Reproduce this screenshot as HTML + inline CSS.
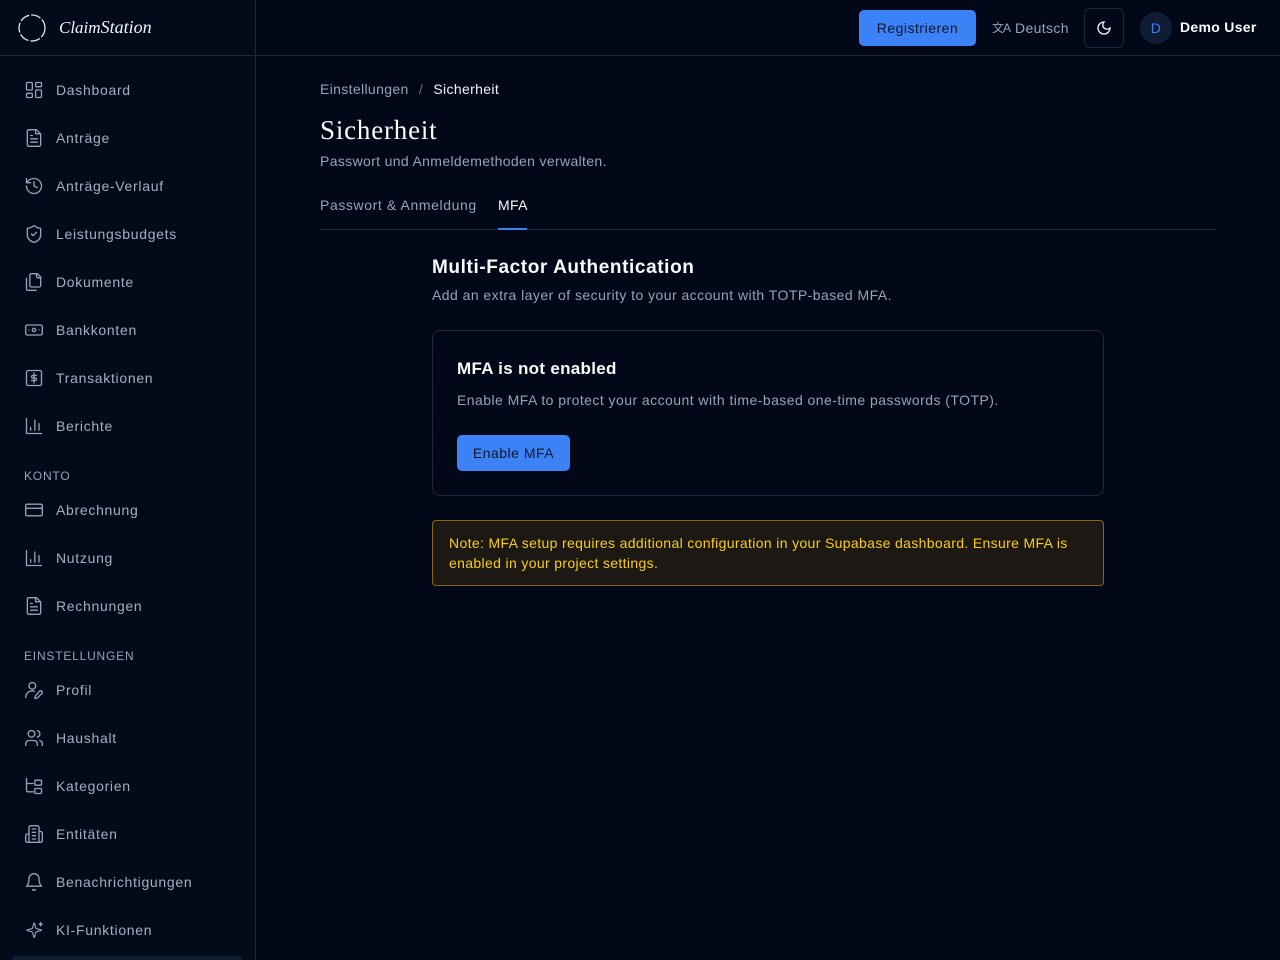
<!DOCTYPE html>
<html style="overflow:hidden"><head><meta charset="utf-8"><style>
*{box-sizing:border-box;margin:0;padding:0}
html,body{width:1280px;height:960px;overflow:hidden}
body{background:#020817;font-family:"Liberation Sans",sans-serif;color:#e2e8f0;position:relative;letter-spacing:.35px}
.side{position:absolute;left:0;top:0;width:256px;height:960px;background:#030a1a;border-right:1px solid #1e293b}
.logo{height:56px;border-bottom:1px solid #1e293b;display:flex;align-items:center;padding-left:17px}
.logo span{font-family:"Liberation Serif",serif;font-style:italic;font-size:17px;color:#f1f5f9;margin-left:12px;letter-spacing:0}
.nav{position:absolute;left:24px;font-size:14px;color:#a3b0c2;display:flex;align-items:center;letter-spacing:.7px}
.nav svg{width:20px;height:20px;margin-right:12px;fill:none;stroke:#94a3b8;stroke-width:1.6;stroke-linecap:round;stroke-linejoin:round}
.sec{position:absolute;left:24px;font-size:12px;color:#94a3b8;letter-spacing:.8px}
.top{position:absolute;left:256px;top:0;right:0;height:56px;border-bottom:1px solid #1e293b}
.btn{background:#3b82f6;color:#0f172a;border-radius:5px;font-size:14px;display:flex;align-items:center;justify-content:center;position:absolute}
</style></head><body>
<div class="side">
<div class="logo"><svg width="30" height="30" viewBox="0 0 30 30"><circle cx="15" cy="15" r="13" fill="none" stroke="#e2e8f0" stroke-width="1.3" stroke-dasharray="10 2"/></svg><span>Claim<span style="margin:0;font-size:18px">Station</span></span></div>
</div>
<div class="nav" style="top:80px"><svg viewBox="0 0 24 24"><rect x="3" y="3" width="7" height="9" rx="1"/><rect x="14" y="3" width="7" height="5" rx="1"/><rect x="14" y="12" width="7" height="9" rx="1"/><rect x="3" y="16" width="7" height="5" rx="1"/></svg>Dashboard</div>
<div class="nav" style="top:128px"><svg viewBox="0 0 24 24"><path d="M15 2H6a2 2 0 0 0-2 2v16a2 2 0 0 0 2 2h12a2 2 0 0 0 2-2V7z"/><path d="M14 2v5h5M16 13H8M16 17H8M10 9H8"/></svg>Anträge</div>
<div class="nav" style="top:176px"><svg viewBox="0 0 24 24"><path d="M3 12a9 9 0 1 0 9-9 9.750 9.75 0 0 0-6.74 2.74L3 8"/><path d="M3 3v5h5M12 7v5l4 2"/></svg>Anträge-Verlauf</div>
<div class="nav" style="top:224px"><svg viewBox="0 0 24 24"><path d="M20 13c0 5-3.5 7.5-7.66 8.95a1 1 0 0 1-.67 0C7.5 20.5 4 18 4 13V6a1 1 0 0 1 1-1c2 0 4.5-1.2 6.240-2.72a1.17 1.17 0 0 1 1.52 0C14.51 3.81 17 5 19 5a1 1 0 0 1 1 1z"/><path d="m9 12 2 2 4-4"/></svg>Leistungsbudgets</div>
<div class="nav" style="top:272px"><svg viewBox="0 0 24 24"><path d="M20 7h-3a2 2 0 0 1-2-2V2"/><path d="M9 18a2 2 0 0 1-2-2V4a2 2 0 0 1 2-2h7l4 4v10a2 2 0 0 1-2 2Z"/><path d="M3 7.6v12.8A1.6 1.6 0 0 0 4.6 22h9.8"/></svg>Dokumente</div>
<div class="nav" style="top:320px"><svg viewBox="0 0 24 24"><rect x="2" y="6" width="20" height="12" rx="2"/><circle cx="12" cy="12" r="2"/><path d="M6 12h.01M18 12h.01"/></svg>Bankkonten</div>
<div class="nav" style="top:368px"><svg viewBox="0 0 24 24"><rect x="3" y="3" width="18" height="18" rx="2"/><path d="M12 6v12M15 9h-4.5a1.5 1.5 0 0 0 0 3h3a1.5 1.5 0 0 1 0 3H9"/></svg>Transaktionen</div>
<div class="nav" style="top:416px"><svg viewBox="0 0 24 24"><path d="M3 3v18h18M18 17V9M13 17V5M8 17v-3"/></svg>Berichte</div>
<div class="sec" style="top:469px">KONTO</div>
<div class="nav" style="top:500px"><svg viewBox="0 0 24 24"><rect x="2" y="5" width="20" height="14" rx="2"/><path d="M2 10h20"/></svg>Abrechnung</div>
<div class="nav" style="top:548px"><svg viewBox="0 0 24 24"><path d="M3 3v18h18M18 17V9M13 17V5M8 17v-3"/></svg>Nutzung</div>
<div class="nav" style="top:596px"><svg viewBox="0 0 24 24"><path d="M15 2H6a2 2 0 0 0-2 2v16a2 2 0 0 0 2 2h12a2 2 0 0 0 2-2V7z"/><path d="M14 2v5h5M16 13H8M16 17H8M10 9H8"/></svg>Rechnungen</div>
<div class="sec" style="top:649px">EINSTELLUNGEN</div>
<div class="nav" style="top:680px"><svg viewBox="0 0 24 24"><circle cx="10" cy="7" r="4"/><path d="M2 21a8 8 0 0 1 10.4-7.6M18.4 13.6a2 2 0 1 1 2.8 2.8L16 21.6l-3 .6.6-3z"/></svg>Profil</div>
<div class="nav" style="top:728px"><svg viewBox="0 0 24 24"><path d="M16 21v-2a4 4 0 0 0-4-4H6a4 4 0 0 0-4 4v2"/><circle cx="9" cy="7" r="4"/><path d="M22 21v-2a4 4 0 0 0-3-3.87M16 3.13a4 4 0 0 1 0 7.75"/></svg>Haushalt</div>
<div class="nav" style="top:776px"><svg viewBox="0 0 24 24"><path d="M3 3v14a2 2 0 0 0 2 2h6M3 9h8"/><rect x="13" y="5" width="8" height="6" rx="1"/><rect x="13" y="15" width="8" height="6" rx="1"/></svg>Kategorien</div>
<div class="nav" style="top:824px"><svg viewBox="0 0 24 24"><path d="M6 22V4a2 2 0 0 1 2-2h8a2 2 0 0 1 2 2v18Z"/><path d="M6 12H4a2 2 0 0 0-2 2v6a2 2 0 0 0 2 2h2M18 9h2a2 2 0 0 1 2 2v9a2 2 0 0 1-2 2h-2M10 6h4M10 10h4M10 14h4M10 18h4"/></svg>Entitäten</div>
<div class="nav" style="top:872px"><svg viewBox="0 0 24 24"><path d="M6 8a6 6 0 0 1 12 0c0 7 3 9 3 9H3s3-2 3-9M10.3 21a1.94 1.94 0 0 0 3.4 0"/></svg>Benachrichtigungen</div>
<div class="nav" style="top:920px"><svg viewBox="0 0 24 24"><path d="M9.9 15.5a2 2 0 0 0-1.4-1.4l-6.1-1.6a.5.5 0 0 1 0-1l6.1-1.6a2 2 0 0 0 1.4-1.4l1.6-6.1a.5.5 0 0 1 1 0l1.6 6.1a2 2 0 0 0 1.4 1.4l6.1 1.6a.5.5 0 0 1 0 1l-6.1 1.6a2 2 0 0 0-1.4 1.4l-1.6 6.1a.5.5 0 0 1-1 0z" transform="translate(2 2) scale(.85)"/><path d="M20 3v4M22 5h-4"/></svg>KI-Funktionen</div>
<div style="position:absolute;left:12px;top:956px;width:230px;height:4px;background:#0f1d33;border-radius:6px 6px 0 0"></div>

<div class="top"></div>
<div class="btn" style="left:859px;top:10px;width:117px;height:36px;letter-spacing:.5px">Registrieren</div>
<div style="position:absolute;left:992px;top:19px;font-size:14px;color:#94a3b8;display:flex;align-items:center"><span style="font-size:12px;margin-right:5px;letter-spacing:-1px">文A</span>Deutsch</div>
<div style="position:absolute;left:1084px;top:8px;width:40px;height:40px;border:1px solid #1e293b;border-radius:6px;display:flex;align-items:center;justify-content:center"><svg width="16" height="16" viewBox="0 0 24 24" fill="none" stroke="#f1f5f9" stroke-width="2"><path d="M12 3a6 6 0 0 0 9 9 9 9 0 1 1-9-9Z"/></svg></div>
<div style="position:absolute;left:1140px;top:12px;width:32px;height:32px;border-radius:50%;background:#0f1c33;color:#3b82f6;font-size:14px;display:flex;align-items:center;justify-content:center">D</div>
<div style="position:absolute;left:1180px;top:19px;font-size:14px;color:#f8fafc;font-weight:bold;letter-spacing:.3px">Demo User</div>

<div style="position:absolute;left:320px;top:81px;font-size:14px;color:#94a3b8">Einstellungen <span style="margin:0 6px;color:#64748b">/</span> <span style="color:#f1f5f9">Sicherheit</span></div>
<div style="position:absolute;left:320px;top:115px;font-family:'Liberation Serif',serif;font-size:27px;color:#f8fafc;letter-spacing:.8px">Sicherheit</div>
<div style="position:absolute;left:320px;top:153px;font-size:14px;color:#94a3b8">Passwort und Anmeldemethoden verwalten.</div>
<div style="position:absolute;left:320px;top:197px;font-size:14px;color:#94a3b8;letter-spacing:.6px">Passwort &amp; Anmeldung</div>
<div style="position:absolute;left:498px;top:197px;font-size:14px;color:#f8fafc">MFA</div>
<div style="position:absolute;left:320px;top:229px;width:896px;height:1px;background:#1e293b"></div>
<div style="position:absolute;left:498px;top:228px;width:29px;height:2px;background:#3b82f6"></div>

<div style="position:absolute;left:432px;top:257px;font-size:19px;font-weight:bold;color:#f8fafc;letter-spacing:.6px">Multi-Factor Authentication</div>
<div style="position:absolute;left:432px;top:287px;font-size:14px;color:#94a3b8;letter-spacing:.45px">Add an extra layer of security to your account with TOTP-based MFA.</div>
<div style="position:absolute;left:432px;top:330px;width:672px;height:166px;border:1px solid #1e293b;border-radius:8px"></div>
<div style="position:absolute;left:457px;top:359px;font-size:17px;font-weight:bold;color:#f8fafc;letter-spacing:.3px">MFA is not enabled</div>
<div style="position:absolute;left:457px;top:392px;font-size:14px;color:#94a3b8;letter-spacing:.45px">Enable MFA to protect your account with time-based one-time passwords (TOTP).</div>
<div class="btn" style="left:457px;top:435px;width:113px;height:36px;letter-spacing:.5px">Enable MFA</div>
<div style="position:absolute;left:432px;top:520px;width:672px;height:66px;border:1px solid #8a6514;border-radius:4px;background:#1c1914;padding:12px 16px;font-size:14px;line-height:20px;color:#facc15;letter-spacing:.35px">Note: MFA setup requires additional configuration in your Supabase dashboard. Ensure MFA is enabled in your project settings.</div>
</body></html>
